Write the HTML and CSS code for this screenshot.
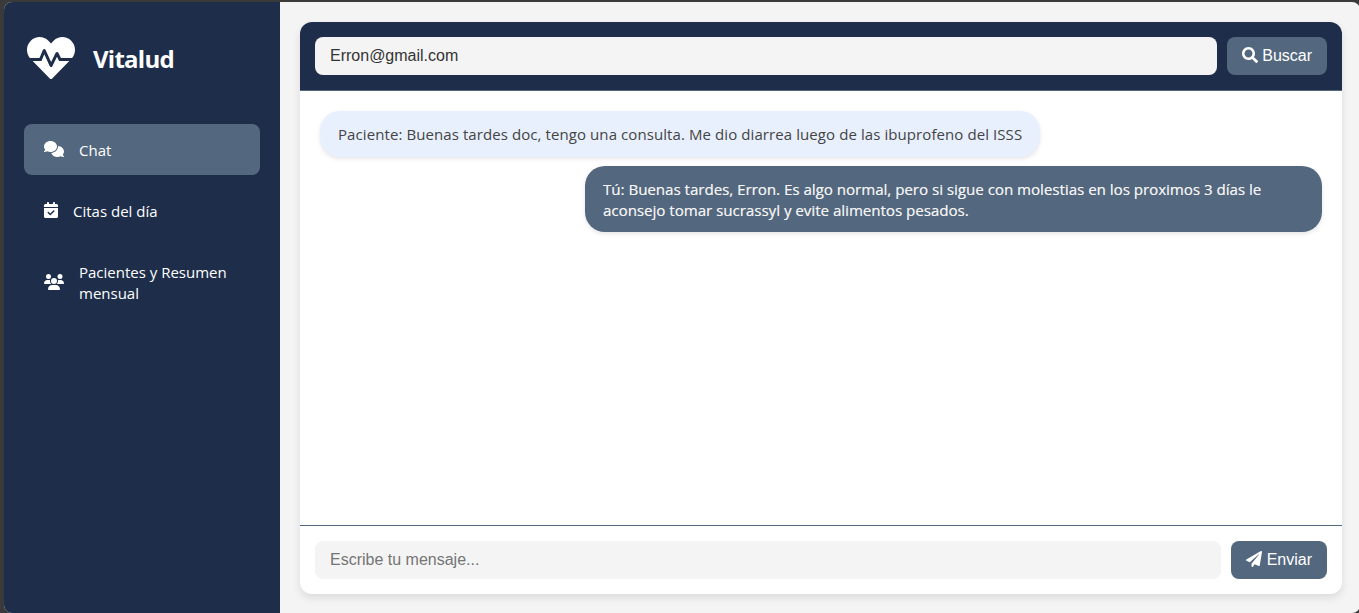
FILE: index.html
```html
<!DOCTYPE html>
<html lang="es">
<head>
<meta charset="utf-8">
<title>Vitalud</title>
<link rel="stylesheet" href="styles.css">
</head>
<body>
<div class="app">
  <aside class="sidebar">
    <div class="brand">
      <svg class="brand-icon" viewBox="0 0 512 512"><path d="M320.2 243.8l-49.7 99.4c-6 12.1-23.4 11.7-28.9-.6l-56.9-126.3-30 71.7H60.6l182.5 186.5c7.1 7.3 18.6 7.3 25.7 0L451.4 288H342.3l-22.1-44.2zM473.7 73.9l-2.4-2.5c-51.5-52.6-135.8-52.6-187.4 0L256 100l-27.9-28.5c-51.5-52.7-135.9-52.7-187.4 0l-2.4 2.4C-10.4 123.7-12.5 203 31 256h102.4l35.9-86.2c5.4-12.9 23.6-13.2 29.4-.4l58.2 129.3 49-97.9c5.9-11.8 22.7-11.8 28.6 0l27.6 55.2H481c43.5-53 41.4-132.3-7.3-182.1z"/></svg>
      <span class="brand-name">Vitalud</span>
    </div>
    <nav class="menu">
      <a class="menu-item active">
        <svg class="icon wide" viewBox="0 0 640 512"><path d="M208 352c114.9 0 208-78.8 208-176S322.9 0 208 0S0 78.800 0 176c0 38.600 14.700 74.300 39.600 103.400c-3.500 9.400-8.700 17.700-14.200 24.700c-4.800 6.200-9.700 11-13.300 14.300c-1.800 1.600-3.300 2.900-4.300 3.700c-.5 .4-.9 .7-1.100 .8l-.2 .2C1 327.200-1.400 334.400 .8 340.900S9.100 352 16 352c21.800 0 43.800-5.600 62.100-12.500c9.200-3.500 17.800-7.400 25.300-11.400C134.100 343.300 169.800 352 208 352zM448 176c0 112.300-99.100 196.900-216.500 207C255.800 457.400 336.400 512 432 512c38.200 0 73.900-8.700 104.700-23.900c7.500 4 16 7.900 25.200 11.400c18.300 6.900 40.300 12.500 62.100 12.500c6.900 0 13.100-4.500 15.200-11.100c2.100-6.600-.2-13.800-5.800-17.900l-.2-.2c-.2-.2-.6-.4-1.100-.8c-1-.8-2.500-2-4.300-3.700c-3.600-3.300-8.500-8.100-13.300-14.300c-5.500-7-10.700-15.400-14.200-24.700c24.900-29 39.600-64.700 39.600-103.400c0-92.800-84.900-168.900-192.600-175.500c.4 5.100 .6 10.300 .6 15.500z"/></svg>
        <span>Chat</span>
      </a>
      <a class="menu-item">
        <svg class="icon narrow" viewBox="0 0 448 512"><path d="M128 0c17.700 0 32 14.300 32 32V64H288V32c0-17.700 14.300-32 32-32s32 14.300 32 32V64h48c26.500 0 48 21.500 48 48v48H0V112C0 85.500 21.500 64 48 64H96V32c0-17.700 14.300-32 32-32zM0 192H448V464c0 26.500-21.500 48-48 48H48c-26.500 0-48-21.500-48-48V192zM329 305c9.400-9.400 9.400-24.600 0-33.900s-24.600-9.400-33.900 0l-95 95-47-47c-9.400-9.400-24.600-9.400-33.900 0s-9.400 24.600 0 33.900l64 64c9.400 9.400 24.600 9.400 33.900 0L329 305z"/></svg>
        <span>Citas del día</span>
      </a>
      <a class="menu-item two-line">
        <svg class="icon wide" viewBox="0 0 640 512"><path d="M144 0a80 80 0 1 1 0 160A80 80 0 1 1 144 0zM512 0a80 80 0 1 1 0 160A80 80 0 1 1 512 0zM0 298.700C0 239.800 47.800 192 106.700 192h42.700c15.900 0 31 3.500 44.600 9.700c-1.300 7.200-1.900 14.700-1.900 22.300c0 38.200 16.800 72.500 43.300 96H21.300C9.600 320 0 310.400 0 298.700zM405.300 320h-.7c26.600-23.500 43.300-57.800 43.300-96c0-7.600-.7-15-1.900-22.300c13.600-6.300 28.700-9.700 44.600-9.700h42.700C592.200 192 640 239.800 640 298.700c0 11.800-9.600 21.300-21.300 21.300H405.300zM224 224a96 96 0 1 1 192 0 96 96 0 1 1 -192 0zM128 485.300C128 411.700 187.700 352 261.300 352H378.700C452.300 352 512 411.700 512 485.300c0 14.700-11.900 26.700-26.700 26.700H154.700c-14.700 0-26.700-11.900-26.700-26.700z"/></svg>
        <span>Pacientes y Resumen<br>mensual</span>
      </a>
    </nav>
  </aside>
  <main class="main">
    <section class="chat">
      <header class="chat-search">
        <input class="field" type="text" value="Erron@gmail.com">
        <button class="btn"><svg class="btn-icon" viewBox="0 0 512 512"><path d="M505 442.700L405.300 343c-4.500-4.500-10.600-7-17-7H372c27.600-35.300 44-79.700 44-128C416 93.100 322.900 0 208 0S0 93.100 0 208s93.100 208 208 208c48.300 0 92.700-16.400 128-44v16.300c0 6.400 2.500 12.500 7 17l99.700 99.700c9.400 9.400 24.600 9.400 33.900 0l28.300-28.300c9.400-9.400 9.400-24.600.1-34zM208 336c-70.700 0-128-57.200-128-128 0-70.700 57.200-128 128-128 70.700 0 128 57.200 128 128 0 70.700-57.200 128-128 128z"/></svg>Buscar</button>
      </header>
      <div class="messages">
        <div class="message received">Paciente: Buenas tardes doc, tengo una consulta. Me dio diarrea luego de las ibuprofeno del ISSS</div>
        <div class="message sent">Tú: Buenas tardes, Erron. Es algo normal, pero si sigue con molestias en los proximos 3 días le<br>aconsejo tomar sucrassyl y evite alimentos pesados.</div>
      </div>
      <footer class="chat-compose">
        <input class="field" type="text" placeholder="Escribe tu mensaje...">
        <button class="btn"><svg class="btn-icon" viewBox="0 0 512 512"><path d="M476 3.200L12.500 270.600c-18.100 10.400-15.800 35.600 2.200 43.200L121 358.400l287.300-253.200c5.500-4.900 13.300 2.600 8.600 8.300L176 407v80.500c0 23.600 28.500 32.900 42.500 15.800L282 426l124.600 52.200c14.200 6 30.400-2.900 33-18.200l72-432C515 7.800 493.300-6.800 476 3.200z"/></svg>Enviar</button>
      </footer>
    </section>
  </main>
</div>
</body>
</html>
```
FILE: styles.css
```css
* { box-sizing: border-box; }
html, body { margin: 0; height: 100%; overflow: hidden; }
body {
  padding: 2px 0 0 4px;
  background: #3a3a3a;
  font-family: "Open Sans", "Noto Sans", sans-serif;
  font-size: 15px;
  line-height: 21px;
}
svg { fill: currentColor; flex: none; }
.app {
  display: flex;
  width: 1356px;
  height: 611px;
  border-radius: 8px;
  overflow: hidden;
  background: #f4f4f4;
}
.sidebar {
  width: 276px;
  padding: 32px 20px;
  background: #1e2e4a;
  color: #fff;
}
.brand { display: flex; align-items: center; gap: 18px; height: 48px; padding-left: 3px; }
.brand-icon { width: 48px; height: 48px; }
.brand-name { font-size: 24px; font-weight: 700; letter-spacing: -0.75px; line-height: 32px; padding-top: 1px; }
.menu { display: flex; flex-direction: column; gap: 10px; margin-top: 42px; }
.menu-item {
  display: flex;
  align-items: center;
  gap: 15px;
  padding: 16px 20px 14px;
  border-radius: 8px;
  white-space: nowrap;
}
.menu-item.active { background: #53677e; }
.icon { height: 16px; margin-bottom: 4px; }
.two-line .icon { margin-bottom: 2px; }
.wide { width: 20px; }
.narrow { width: 14px; }
.main { flex: 1; padding: 20px 18px 0 20px; }
.chat {
  display: flex;
  flex-direction: column;
  height: 572px;
  border-radius: 12px;
  overflow: hidden;
  background: #fff;
  box-shadow: 0 4px 8px rgba(0, 0, 0, 0.1);
}
.chat-search, .chat-compose { display: flex; gap: 10px; padding: 15px; }
.chat-search { background: #1e2e4a; border-bottom: 1px solid #53677e; }
.chat-compose { border-top: 1px solid #53677e; }
.field, .btn {
  height: 38px;
  border: 0;
  border-radius: 8px;
  padding: 0 15px;
  font: 16px "Liberation Sans", Arial, sans-serif;
}
.field { flex: 1; min-width: 0; background: #f4f4f4; color: #333; }
.field::placeholder { color: #757575; }
.btn { display: flex; align-items: center; gap: 4.4px; background: #53677e; color: #fff; }
.btn-icon { width: 16px; height: 16px; margin-bottom: 2px; }
.messages { flex: 1; display: flex; flex-direction: column; gap: 9px; padding: 20px; }
.message {
  padding: 13px 18px 11px;
  border-radius: 20px;
  white-space: nowrap;
  box-shadow: 0 2px 4px rgba(0, 0, 0, 0.1);
}
.received { align-self: flex-start; width: 720px; height: 46px; background: #e8f0fe; color: #444; letter-spacing: 0.085px; }
.sent { align-self: flex-end; width: 737px; height: 66px; background: #53677e; color: #f4f4f4; letter-spacing: 0.03px; text-shadow: 0.3px 0 0 rgba(244, 244, 244, 0.6); }
```
